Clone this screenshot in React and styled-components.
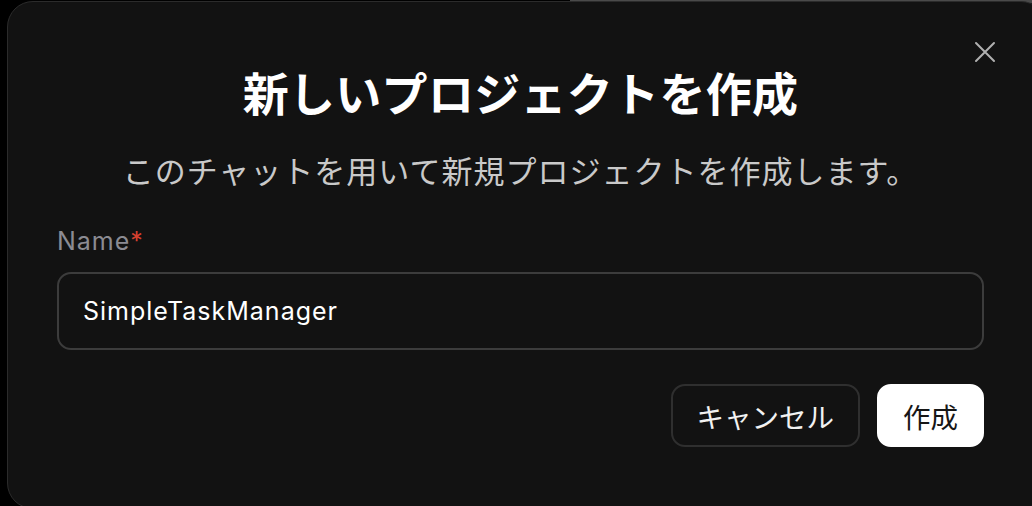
import React from "react";
import styled, { createGlobalStyle } from "styled-components";

const GlobalStyle = createGlobalStyle`
  html, body {
    margin: 0;
    padding: 0;
    background: #000;
    overflow: hidden;
  }
  body {
    font-family: Inter, "Noto Sans CJK JP", sans-serif;
  }
`

const Backdrop = styled.div`
  position: relative;
  width: 1032px;
  height: 506px;
  background: #000;
  overflow: hidden;
`
const TopStrip = styled.div`
  position: absolute;
  top: 0;
  left: 570px;
  right: 0;
  height: 3px;
  background: #4a4a4a;
`
const Dialog = styled.div`
  position: absolute;
  top: 1px;
  left: 7px;
  width: 1040px;
  height: 508px;
  box-sizing: border-box;
  background: #121212;
  border: 1px solid #2b2b2b;
  border-radius: 26px;
  padding: 62px 55px 0 49px;
  display: flex;
  flex-direction: column;
`
const Inner = styled.div`
  width: 927px;
  display: flex;
  flex-direction: column;
`
const CloseButton = styled.button`
  position: absolute;
  top: 37px;
  left: 964px;
  width: 26px;
  height: 26px;
  padding: 0;
  border: none;
  background: transparent;
  display: flex;
  align-items: center;
  justify-content: center;
  cursor: pointer;
`
const Title = styled.h2`
  margin: 0;
  text-align: center;
  font-size: 46px;
  line-height: 60px;
  font-weight: 700;
  color: #fff;
  letter-spacing: 0.3px;
`
const Subtitle = styled.p`
  margin: 28px 0 0;
  text-align: center;
  font-size: 31px;
  line-height: 40px;
  color: #c9c9c9;
  letter-spacing: 1px;
`
const Label = styled.label`
  margin-top: 34px;
  font-size: 25px;
  line-height: 30px;
  letter-spacing: 1px;
  color: #8b8b92;
`
const Required = styled.span`
  color: #d6402f;
`
const Input = styled.input`
  margin-top: 16px;
  height: 78px;
  box-sizing: border-box;
  border: 2px solid #3c3c3c;
  border-radius: 14px;
  background: transparent;
  padding: 0 24px;
  font-family: Inter, "Noto Sans CJK JP", sans-serif;
  font-size: 25px;
  letter-spacing: 1px;
  color: #fff;
  outline: none;
`
const Footer = styled.div`
  margin-top: 34px;
  display: flex;
  justify-content: flex-end;
  gap: 17px;
`
const Button = styled.button`
  height: 63px;
  box-sizing: border-box;
  padding: 0 ${(p) => (p.primary ? "24px" : "24px")};
  border-radius: 14px;
  border: 2px solid ${(p) => (p.primary ? "#fff" : "#2f2f2f")};
  background: ${(p) => (p.primary ? "#fff" : "transparent")};
  color: ${(p) => (p.primary ? "#161616" : "#f2f2f2")};
  font-family: Inter, "Noto Sans CJK JP", sans-serif;
  font-size: 27.5px;
  cursor: pointer;
`

const XIcon = () => (
  <svg width="22" height="22" viewBox="0 0 22 22" fill="none">
    <path d="M2 2 L20 20 M20 2 L2 20" stroke="#b0b0b0" strokeWidth="2" strokeLinecap="round" />
  </svg>
)

const App = () => {
  return (
    <Backdrop>
      <GlobalStyle />
      <TopStrip />
      <Dialog>
        <CloseButton aria-label="close">
          <XIcon />
        </CloseButton>
        <Inner>
          <Title>新しいプロジェクトを作成</Title>
          <Subtitle>このチャットを用いて新規プロジェクトを作成します。</Subtitle>
          <Label>
            Name<Required>*</Required>
          </Label>
          <Input defaultValue="SimpleTaskManager" />
          <Footer>
            <Button>キャンセル</Button>
            <Button primary>作成</Button>
          </Footer>
        </Inner>
      </Dialog>
    </Backdrop>
  )
}

export default App
